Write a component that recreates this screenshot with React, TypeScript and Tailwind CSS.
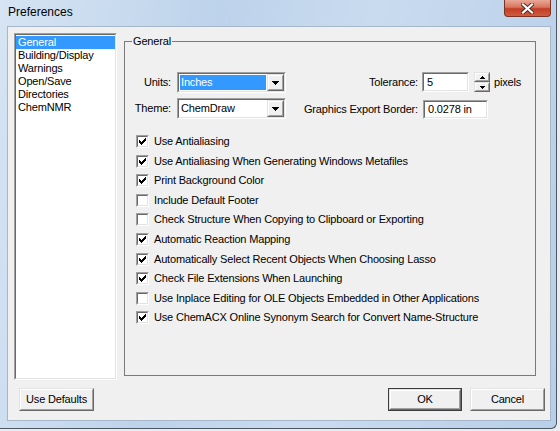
import React, { ReactNode } from "react";

const categories = ["General", "Building/Display", "Warnings", "Open/Save", "Directories", "ChemNMR"];

const options: { label: string; checked: boolean }[] = [
  { label: "Use Antialiasing", checked: true },
  { label: "Use Antialiasing When Generating Windows Metafiles", checked: true },
  { label: "Print Background Color", checked: true },
  { label: "Include Default Footer", checked: false },
  { label: "Check Structure When Copying to Clipboard or Exporting", checked: false },
  { label: "Automatic Reaction Mapping", checked: true },
  { label: "Automatically Select Recent Objects When Choosing Lasso", checked: true },
  { label: "Check File Extensions When Launching", checked: true },
  { label: "Use Inplace Editing for OLE Objects Embedded in Other Applications", checked: false },
  { label: "Use ChemACX Online Synonym Search for Convert Name-Structure", checked: true },
];

// classic 3D borders
const Sunken = ({ className = "", inner = "", children }: { className?: string; inner?: string; children?: ReactNode }) => (
  <div className={`border border-t-[#a0a0a0] border-l-[#a0a0a0] border-r-white border-b-white ${className}`}>
    <div className={`h-full w-full border border-t-[#696969] border-l-[#696969] border-r-[#e3e3e3] border-b-[#e3e3e3] bg-white ${inner}`}>
      {children}
    </div>
  </div>
);

const Raised = ({ className = "", inner = "", children }: { className?: string; inner?: string; children?: ReactNode }) => (
  <div className={`border border-t-[#e3e3e3] border-l-[#e3e3e3] border-r-[#696969] border-b-[#696969] ${className}`}>
    <div className={`flex h-full w-full items-center justify-center border border-t-white border-l-white border-r-[#a0a0a0] border-b-[#a0a0a0] bg-[#f0f0f0] ${inner}`}>
      {children}
    </div>
  </div>
);

const DownTri = ({ w = 7, h = 4 }: { w?: number; h?: number }) => (
  <svg width={w} height={h} viewBox={`0 0 ${w} ${h}`} shapeRendering="crispEdges">
    <polygon points={`0,0 ${w},0 ${w / 2},${h}`} fill="#000" />
  </svg>
);

const UpTri = ({ w = 5, h = 3 }: { w?: number; h?: number }) => (
  <svg width={w} height={h} viewBox={`0 0 ${w} ${h}`} shapeRendering="crispEdges">
    <polygon points={`0,${h} ${w},${h} ${w / 2},0`} fill="#000" />
  </svg>
);

const Select = ({ value, selected }: { value: string; selected?: boolean }) => (
  <Sunken className="h-[21px] w-[109px]" inner="flex">
    <div className="flex flex-1 p-[1px]">
      <span className={`flex flex-1 items-center pl-[1px] ${selected ? "bg-[#3399ff] text-white" : ""}`}>{value}</span>
    </div>
    <Raised className="h-[17px] w-[17px]">
      <DownTri />
    </Raised>
  </Sunken>
);

const Check = ({ checked }: { checked: boolean }) => (
  <Sunken className="h-[13px] w-[13px] shrink-0" inner="flex items-center justify-center">
    {checked && (
      <svg width="7" height="7" viewBox="0 0 7 7" shapeRendering="crispEdges">
        <path d="M6 0h1v3h-1v1h-1v1h-1v1h-1v1h-1v-1h-1v-1h-1v-3h1v1h1v1h1v-1h1v-1h1z" fill="#000" />
      </svg>
    )}
  </Sunken>
);

const Button = ({ label, isDefault }: { label: string; isDefault?: boolean }) => (
  <div className={isDefault ? "border border-[#3c3c3c]" : ""}>
    <Raised className={isDefault ? "h-[21px] w-[72px]" : "h-[23px] w-[75px]"}>{label}</Raised>
  </div>
);

export default function App() {
  return (
    <div className="h-[431px] w-[560px] bg-[#e9edf2] font-['Liberation_Sans',Arial,sans-serif] text-[11px] leading-[13px] tracking-[-0.17px] text-black">
      <div className="relative h-[429px] w-[557px] rounded-br-[6px] border-r border-b border-[#4e5660] bg-[linear-gradient(100deg,#d6e4f3_0%,#bdd3eb_35%,#c9dbef_60%,#b8cfe9_100%)] pl-[7px] pt-[26px]">
        <div className="absolute left-[8px] top-[5px] text-[12px] leading-[15px] tracking-normal text-black">Preferences</div>

        {/* close button */}
        <div className="absolute right-[5px] top-0 flex h-[17px] w-[47px] items-center justify-center rounded-b-[4px] border border-t-0 border-[#7d3226] bg-[linear-gradient(#e9a897_0%,#d9755e_45%,#c23d24_55%,#cf5b3f_100%)]">
          <svg width="13" height="11" viewBox="0 0 13 11">
            <path d="M2 1.5 L11 9.5 M11 1.5 L2 9.5" stroke="#4a2a26" strokeWidth="4" strokeLinecap="square" />
            <path d="M2 1.5 L11 9.5 M11 1.5 L2 9.5" stroke="#fff" strokeWidth="2.2" strokeLinecap="square" />
          </svg>
        </div>

        {/* client area */}
        <div className="flex h-[395px] w-[544px] flex-col border border-[#a6b7c9] bg-[#f0f0f0] pl-[6px] pt-[6px]">
          <div className="flex">
            <Sunken className="h-[347px] w-[103px]" inner="pt-[1px]">
              {categories.map((c, i) => (
                <div key={c} className={`h-[13px] pl-[2px] ${i === 0 ? "bg-[#3399ff] text-white" : ""}`}>
                  {c}
                </div>
              ))}
            </Sunken>

            <div className="relative ml-[7px] mt-[8px] h-[335px] w-[412px] border border-[#7a7a7a]">
              <span className="absolute -top-[7px] left-[7px] bg-[#f0f0f0] px-[1px]">General</span>

              <div className="flex flex-col pl-[6px] pt-[30px]">
                <div className="flex">
                  <div className="flex flex-col gap-[5px]">
                    <div className="flex h-[21px] items-center gap-[6px]">
                      <span className="w-[40px] text-right">Units:</span>
                      <Select value="Inches" selected />
                    </div>
                    <div className="flex h-[21px] items-center gap-[6px]">
                      <span className="w-[40px] text-right">Theme:</span>
                      <Select value="ChemDraw" />
                    </div>
                  </div>

                  <div className="ml-[4px] flex flex-col gap-[8px]">
                    <div className="flex h-[20px] items-center">
                      <span className="w-[128px] text-right">Tolerance:</span>
                      <Sunken className="ml-[4px] h-[20px] w-[47px]" inner="flex items-center pl-[3px]">
                        5
                      </Sunken>
                      <div className="ml-[5px] flex h-[20px] w-[16px] flex-col">
                        <Raised className="h-[10px] w-[16px]">
                          <UpTri />
                        </Raised>
                        <Raised className="h-[10px] w-[16px]">
                          <DownTri w={5} h={3} />
                        </Raised>
                      </div>
                      <span className="ml-[4px]">pixels</span>
                    </div>
                    <div className="flex h-[19px] items-center">
                      <span className="w-[128px] text-right">Graphics Export Border:</span>
                      <Sunken className="ml-[5px] h-[19px] w-[65px]" inner="flex items-center pl-[3px]">
                        0.0278 in
                      </Sunken>
                    </div>
                  </div>
                </div>

                <div className="mt-[16px] flex flex-col gap-[6.6px] pl-[5px]">
                  {options.map((o) => (
                    <div key={o.label} className="flex h-[13px] items-center gap-[5px]">
                      <Check checked={o.checked} />
                      <span className="whitespace-nowrap">{o.label}</span>
                    </div>
                  ))}
                </div>
              </div>
            </div>
          </div>

          <div className="mt-[8px] flex pr-[5px]">
            <div className="ml-[5px]">
              <Button label="Use Defaults" />
            </div>
            <div className="flex-1" />
            <Button label="OK" isDefault />
            <div className="ml-[8px]">
              <Button label="Cancel" />
            </div>
          </div>
        </div>
      </div>
    </div>
  );
}
